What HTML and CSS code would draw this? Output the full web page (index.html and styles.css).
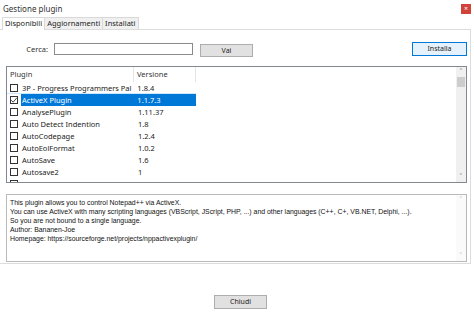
FILE: index.html
```html
<!DOCTYPE html>
<html>
<head>
<meta charset="utf-8">
<link rel="stylesheet" href="styles.css">
</head>
<body>
<div class="window">
  <div class="titlebar">
    <span class="title">Gestione plugin</span>
    <span class="close">&#215;</span>
  </div>
  <div class="tabs">
    <span class="tab active">Disponibili</span>
    <span class="tab">Aggiornamenti</span>
    <span class="tab">Installati</span>
  </div>
  <div class="panel">
    <div class="search">
      <label class="lbl">Cerca:</label>
      <span class="input"></span>
      <span class="btn vai">Vai</span>
      <span class="spacer"></span>
      <span class="btn primary">Installa</span>
    </div>
    <div class="list">
      <div class="listbody">
        <div class="head">
          <span class="c1">Plugin</span>
          <span class="c2">Versione</span>
        </div>
        <div class="row hover"><span class="cb"></span><span class="c1">3P - Progress Programmers Pal</span><span class="c2">1.8.4</span></div>
        <div class="row sel"><span class="cb checked"><svg width="8" height="8" viewBox="0 0 8 8"><path d="M1.2 4.2 L3.2 6.2 L6.8 1.8" fill="none" stroke="#333" stroke-width="0.9"/></svg></span><span class="hl"><span class="c1">ActiveX Plugin</span><span class="c2">1.1.7.3</span></span></div>
        <div class="row"><span class="cb"></span><span class="c1">AnalysePlugin</span><span class="c2">1.11.37</span></div>
        <div class="row"><span class="cb"></span><span class="c1">Auto Detect Indention</span><span class="c2">1.8</span></div>
        <div class="row"><span class="cb"></span><span class="c1">AutoCodepage</span><span class="c2">1.2.4</span></div>
        <div class="row"><span class="cb"></span><span class="c1">AutoEolFormat</span><span class="c2">1.0.2</span></div>
        <div class="row"><span class="cb"></span><span class="c1">AutoSave</span><span class="c2">1.6</span></div>
        <div class="row"><span class="cb"></span><span class="c1">Autosave2</span><span class="c2">1</span></div>
        <div class="row"><span class="cb"></span></div>
      </div>
      <div class="scroll">
        <span class="arrow">&#708;</span>
        <span class="thumb"></span>
        <span class="track"></span>
        <span class="arrow">&#709;</span>
      </div>
    </div>
    <div class="desc">
      <div class="desctext">
        <div>This plugin allows you to control Notepad++ via ActiveX.</div>
        <div>You can use ActiveX with many scripting languages (VBScript, JScript, PHP, ...) and other languages (C++, C+, VB.NET, Delphi, ...).</div>
        <div>So you are not bound to a single language.</div>
        <div>Author: Bananen-Joe</div>
        <div>Homepage: https://sourceforge.net/projects/nppactivexplugin/</div>
      </div>
      <div class="scroll small">
        <span class="arrow">&#708;</span>
        <span class="track"></span>
        <span class="arrow">&#709;</span>
      </div>
    </div>
  </div>
  <div class="footer">
    <span class="btn chiudi">Chiudi</span>
  </div>
</div>
</body>
</html>
```
FILE: styles.css
```css
html, body {
  margin: 0;
  padding: 0;
  background: #ffffff;
}
body {
  font-family: "Noto Sans", "Open Sans", sans-serif;
  font-size: 7.5px;
  color: #1a1a1a;
  width: 474px;
  height: 325px;
  overflow: hidden;
}
.window {
  display: flex;
  flex-direction: column;
  height: 325px;
}
.titlebar {
  height: 17px;
  display: flex;
  align-items: center;
  justify-content: space-between;
  padding: 0 3px 0 3px;
}
.title {
  font-size: 8px;
  color: #333;
}
.close {
  width: 10px;
  height: 10px;
  background: #d1423a;
  color: #fff;
  font-size: 7px;
  line-height: 10px;
  text-align: center;
}
.tabs {
  display: flex;
  height: 12px;
  padding-left: 2px;
  align-items: flex-end;
}
.tab {
  height: 11px;
  line-height: 11px;
  padding: 0 2px;
  border: 1px solid #d9d9d9;
  border-bottom: none;
  background: #f0f0f0;
  font-size: 7.5px;
  margin-right: -1px;
  color: #222;
}
.tab.active {
  background: #ffffff;
  height: 12px;
  position: relative;
  z-index: 1;
  margin-bottom: -1px;
}
.panel {
  margin: 0 3px 0 0;
  border: 1px solid #dcdcdc;
  border-left: none;
  height: 235px;
  box-sizing: border-box;
  padding: 12px 3px 0 6px;
  display: flex;
  flex-direction: column;
}
.search {
  display: flex;
  align-items: center;
  height: 14px;
}
.lbl {
  width: 48px;
  text-align: right;
  padding-right: 6px;
  box-sizing: border-box;
  color: #333;
}
.input {
  width: 139px;
  height: 12px;
  border: 1px solid #8a8a8a;
  box-sizing: border-box;
  background: #fff;
}
.btn {
  height: 13px;
  line-height: 11px;
  box-sizing: border-box;
  border: 1px solid #adadad;
  background: #e1e1e1;
  text-align: center;
  font-size: 7px;
  color: #222;
}
.vai {
  width: 53px;
  margin-left: 7px;
  margin-top: 2px;
}
.spacer {
  flex: 1;
}
.primary {
  width: 55px;
  height: 14px;
  line-height: 12px;
  border-color: #0078d7;
  background: #e5f1fb;
}
.list {
  margin-top: 10px;
  height: 117px;
  border: 1px solid #828790;
  box-sizing: border-box;
  display: flex;
  overflow: hidden;
}
.listbody {
  flex: 1;
  overflow: hidden;
}
.head {
  height: 15px;
  display: flex;
  align-items: center;
  color: #333;
}
.head .c1 {
  width: 127px;
  padding-left: 3px;
  box-sizing: border-box;
  border-right: 1px solid #e5e5e5;
  height: 15px;
  line-height: 15px;
}
.head .c2 {
  width: 62px;
  padding-left: 3px;
  box-sizing: border-box;
  border-right: 1px solid #e5e5e5;
  height: 15px;
  line-height: 15px;
}
.row {
  height: 12px;
  display: flex;
  align-items: center;
  color: #222;
}
.row.hover {
  box-shadow: inset 0 -1px 0 #cce8ff;
  width: 189px;
}
.cb {
  width: 8px;
  height: 8px;
  border: 1px solid #333;
  box-sizing: border-box;
  margin-left: 3px;
  margin-right: 3px;
  background: #fff;
  display: flex;
  align-items: center;
  justify-content: center;
  flex: none;
}
.cb svg {
  display: block;
  flex: none;
}
.row .c1 {
  width: 113px;
  padding-left: 1px;
  white-space: nowrap;
  overflow: hidden;
}
.row .c2 {
  width: 62px;
  padding-left: 3px;
  box-sizing: border-box;
}
.hl {
  display: flex;
  align-items: center;
  height: 12px;
  background: #0078d7;
  color: #fff;
  width: 175px;
}
.scroll {
  width: 10px;
  background: #f0f0f0;
  display: flex;
  flex-direction: column;
  align-items: center;
  flex: none;
}
.arrow {
  height: 10px;
  line-height: 10px;
  font-size: 8px;
  color: #606060;
}
.thumb {
  width: 8px;
  height: 10px;
  background: #cdcdcd;
}
.track {
  flex: 1;
}
.desc {
  margin-top: 11px;
  height: 68px;
  border: 1px solid #b9b9b9;
  box-sizing: border-box;
  display: flex;
}
.desctext {
  flex: 1;
  padding: 3px 3px;
  font-family: "Liberation Sans", sans-serif;
  font-size: 6.9px;
  line-height: 9px;
  color: #111;
}
.scroll.small .arrow {
  color: #b0b0b0;
}
.scroll.small {
  background: #fafafa;
}
.footer {
  flex: 1;
  display: flex;
  justify-content: center;
  padding-top: 31px;
}
.chiudi {
  width: 53px;
  height: 14px;
  line-height: 12px;
  margin-left: 7px;
}
```
